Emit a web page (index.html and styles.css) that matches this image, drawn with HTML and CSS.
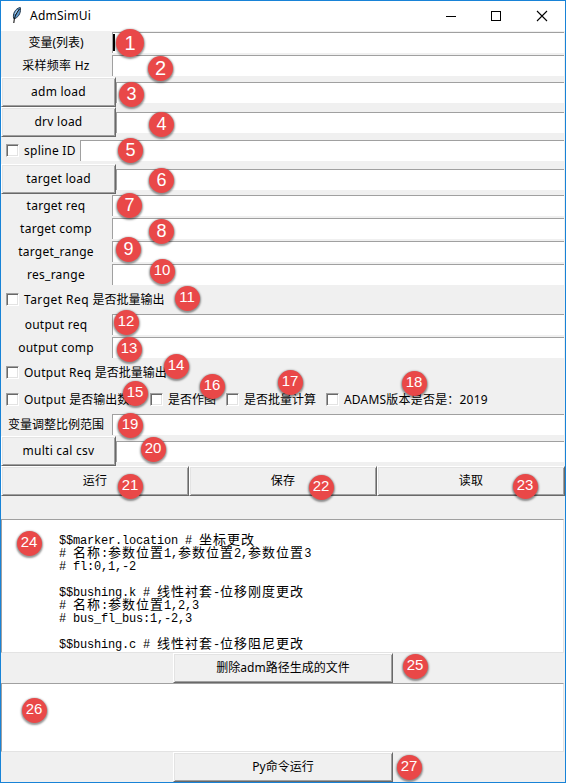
FILE: index.html
```html
<!DOCTYPE html>
<html lang="zh-CN">
<head>
<meta charset="utf-8">
<title>AdmSimUi</title>
<link rel="stylesheet" href="styles.css">
</head>
<body>
<div class="window">
  <header class="titlebar">
    <svg class="feather" width="12" height="18" viewBox="0 0 12 18"><path d="M2.700 12.500C1.500 8 4 2.500 9.300 1.500c.8 4-.8 9-5.300 11z" fill="#5f9bd0" stroke="#26384a" stroke-width="1"/><path d="M2.800 17C3 12 5 7 8.500 3" fill="none" stroke="#111" stroke-width="1.100"/><path d="M4 8l2.500-4" stroke="#b9d8ef" stroke-width="1"/></svg>
    <span class="title">AdmSimUi</span>
    <svg class="controls" width="106" height="12" viewBox="0 0 106 12"><path d="M0 6.500h10" stroke="#000"/><rect x="45.500" y="1.500" width="9" height="9" fill="none" stroke="#000"/><path d="M91 1l10 10M101 1l-10 10" stroke="#000" stroke-width="1.100"/></svg>
  </header>
  <main>
    <div class="row"><label class="name cn">变量(列表)</label><div class="entry"><i class="caret"></i></div></div>
    <div class="row"><label class="name">采样频率 Hz</label><div class="entry"></div></div>
    <div class="row tall"><button>adm load</button><div class="entry"></div></div>
    <div class="row tall"><button>drv load</button><div class="entry"></div></div>
    <div class="row mid"><label class="check spline"><i class="box"></i>spline ID</label><div class="entry"></div></div>
    <div class="row tall"><button>target load</button><div class="entry"></div></div>
    <div class="row"><label class="name">target req</label><div class="entry"></div></div>
    <div class="row"><label class="name">target comp</label><div class="entry"></div></div>
    <div class="row"><label class="name">target_range</label><div class="entry"></div></div>
    <div class="row"><label class="name">res_range</label><div class="entry"></div></div>
    <div class="row mid"><label class="check"><i class="box"></i><span class="wide">Target Req </span><span class="cn">是否批量输出</span></label></div>
    <div class="row"><label class="name">output req</label><div class="entry"></div></div>
    <div class="row"><label class="name">output comp</label><div class="entry"></div></div>
    <div class="row mid"><label class="check"><i class="box"></i>Output Req <span class="cn">是否批量输出</span></label></div>
    <div class="row mid options">
      <label class="check"><i class="box"></i>Output <span class="cn">是否输出数据</span></label>
      <label class="check"><i class="box"></i><span class="cn">是否作图</span></label>
      <label class="check"><i class="box"></i><span class="cn">是否批量计算</span></label>
      <label class="check"><i class="box"></i><span class="version">ADAMS版本是否是：2019</span></label>
    </div>
    <div class="row"><label class="name cn">变量调整比例范围</label><div class="entry"></div></div>
    <div class="row tall"><button>multi cal csv</button><div class="entry"></div></div>
    <div class="actions"><button>运行</button><button>保存</button><button>读取</button></div>
    <div class="text code">
<pre>$$marker.location # <b>坐标更改</b>
# <b>名称</b>:<b>参数位置</b>1,<b>参数位置</b>2,<b>参数位置</b>3
# fl:0,1,-2

$$bushing.k # <b>线性衬套</b>-<b>位移刚度更改</b>
# <b>名称</b>:<b>参数位置</b>1,2,3
# bus_fl_bus:1,-2,3

$$bushing.c # <b>线性衬套</b>-<b>位移阻尼更改</b></pre>
    </div>
    <div class="center"><button class="cn">删除adm路径生成的文件</button></div>
    <div class="text command"></div>
    <div class="center"><button class="cn">Py命令运行</button></div>
  </main>
  <div class="badge b1">1</div><div class="badge b2">2</div><div class="badge b3">3</div>
  <div class="badge b4">4</div><div class="badge b5">5</div><div class="badge b6">6</div>
  <div class="badge b7">7</div><div class="badge b8">8</div><div class="badge b9">9</div>
  <div class="badge two b10">10</div><div class="badge two b11">11</div><div class="badge two b12">12</div>
  <div class="badge two b13">13</div><div class="badge two b14">14</div><div class="badge two b15">15</div>
  <div class="badge two b16">16</div><div class="badge two b17">17</div><div class="badge two b18">18</div>
  <div class="badge two b19">19</div><div class="badge two b20">20</div><div class="badge two b21">21</div>
  <div class="badge two b22">22</div><div class="badge two b23">23</div><div class="badge two b24">24</div>
  <div class="badge two b25">25</div><div class="badge two b26">26</div><div class="badge two b27">27</div>
</div>
</body>
</html>
```
FILE: styles.css
```css
* { box-sizing: border-box; }
body { margin: 0; }
.window {
  position: relative;
  width: 566px;
  height: 783px;
  border: 1px solid #1883d7;
  background: #f0f0f0;
  overflow: hidden;
  font: 12px/16px "Noto Sans", "Noto Sans CJK SC", sans-serif;
  letter-spacing: .25px;
  color: #000;
}
.cn { letter-spacing: 0; }
.wide { letter-spacing: .45px; }
.titlebar {
  display: flex;
  align-items: center;
  height: 30px;
  padding: 0 13px 0 10px;
  background: #fff;
}
.title { margin-left: 7px; }
.controls { margin-left: auto; }
.feather { margin-top: -2px; }

.row { display: flex; align-items: center; height: 23px; padding-right: 1px; }
.mid { height: 27px; }
.tall { height: 30px; }
.name { flex: none; width: 111px; padding-right: 1px; text-align: center; white-space: nowrap; }
.entry {
  flex: 1;
  height: 21px;
  background: #fff;
  border-top: 1px solid #a0a0a0;
  border-left: 1px solid #a0a0a0;
}
.caret { display: block; width: 2px; height: 17px; margin: 1px 0 0; background: #000; }
button {
  flex: none;
  width: 115px;
  height: 30px;
  padding: 0 0 1px;
  border: 1px solid;
  border-color: #fff #696969 #696969 #fff;
  box-shadow: inset 1px 1px #e3e3e3, inset -1px -1px #a0a0a0;
  background: #f0f0f0;
  font: inherit;
  letter-spacing: inherit;
  color: #000;
}
.check { display: flex; align-items: center; white-space: pre; padding-left: 5px; }
.spline { width: 79px; }
.version { letter-spacing: .2px; }
.box {
  flex: none;
  width: 13px;
  height: 13px;
  margin-right: 5px;
  background: #fff;
  border: 1px solid;
  border-color: #a0a0a0 #fff #fff #a0a0a0;
  box-shadow: inset 1px 1px #696969, inset -1px -1px #e3e3e3;
}
.options { display: grid; grid-template-columns: 144px 76px 100px 1fr; }
.actions { display: grid; grid-template-columns: repeat(3, 188px); height: 30px; }
.actions button { width: 188px; }

.text {
  margin-right: 1px;
  overflow: hidden;
  background: #fff;
  border: 1px solid;
  border-color: #a0a0a0 #e3e3e3 #e3e3e3 #a0a0a0;
}
.code { height: 134px; margin-top: 23px; padding: 15px 0 0 57px; }
.code pre {
  margin: 0;
  font: 12px/13px "Liberation Mono", monospace;
  letter-spacing: -.2px;
}
.code b { font: 13px/0 "Noto Sans CJK SC", sans-serif; letter-spacing: 1px; }
.command { height: 69px; }
.center { display: flex; height: 30px; padding-left: 172px; }
.center button { width: 220px; }

.badge {
  position: absolute;
  width: 25px;
  height: 25px;
  border-radius: 50%;
  background: #e94848;
  box-shadow: 0 1px 2px 1px rgba(0, 0, 0, .42);
  color: #fff;
  font: 18px/25px "Liberation Sans", sans-serif;
  letter-spacing: 0;
  text-align: center;
}
.two { font-size: 15px; line-height: 22px; text-indent: -1px; }
.b1 { left: 115px; top: 28px; width: 28px; height: 28px; font-size: 20px; line-height: 28px; }
.b2 { left: 147px; top: 55px; font-size: 20px; }
.b3 { left: 118px; top: 81px; }
.b4 { left: 148px; top: 111px; }
.b5 { left: 117px; top: 137px; }
.b6 { left: 148px; top: 167px; }
.b7 { left: 116px; top: 192px; }
.b8 { left: 148px; top: 218px; }
.b9 { left: 115px; top: 236px; }
.b10 { left: 149px; top: 258px; }
.b11 { left: 174px; top: 285px; }
.b12 { left: 113px; top: 309px; }
.b13 { left: 116px; top: 336px; }
.b14 { left: 163px; top: 353px; }
.b15 { left: 122px; top: 380px; }
.b16 { left: 199px; top: 373px; }
.b17 { left: 277px; top: 369px; }
.b18 { left: 401px; top: 370px; }
.b19 { left: 117px; top: 412px; }
.b20 { left: 140px; top: 436px; }
.b21 { left: 117px; top: 473px; }
.b22 { left: 308px; top: 474px; }
.b23 { left: 512px; top: 473px; }
.b24 { left: 16px; top: 530px; }
.b25 { left: 402px; top: 653px; }
.b26 { left: 21px; top: 697px; }
.b27 { left: 396px; top: 754px; }
```
